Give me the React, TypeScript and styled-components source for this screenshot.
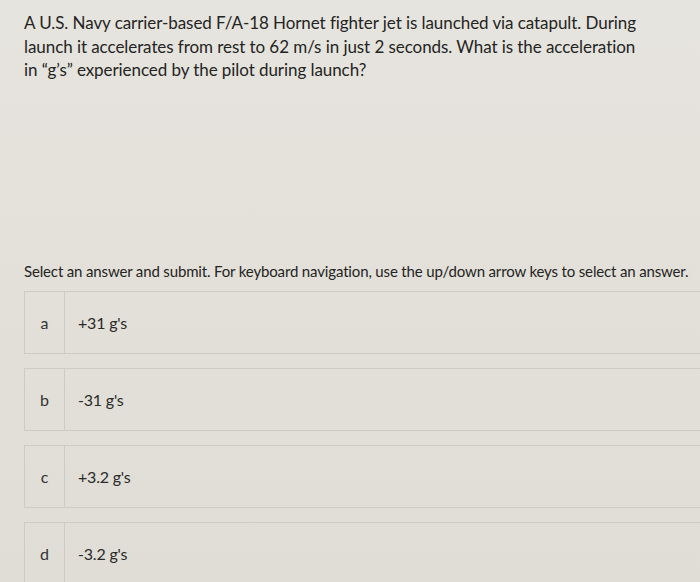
import React from "react";
import styled, { createGlobalStyle } from "styled-components";

const Global = createGlobalStyle`
  html, body { margin: 0; padding: 0; background: #e2e0d8; }
  body { font-family: Lato, "Open Sans", sans-serif; color: #242424; overflow: hidden; }
`;

const Page = styled.div`
  width: 700px;
  height: 582px;
  padding: 11px 0 0 24px;
  box-sizing: border-box;
  overflow: hidden;
  background: linear-gradient(180deg, #e6e4de 0%, #e2e0d8 50%, #dfddd5 100%);
`;

const Question = styled.div`
  font-size: 17px;
  line-height: 23.5px;
  letter-spacing: -0.07px;
  height: 249px;
`;

const Line = styled.span`
  display: block;
  white-space: nowrap;
`;

const Instruction = styled.div`
  font-size: 15px;
  line-height: 22px;
  letter-spacing: -0.15px;
  white-space: nowrap;
  margin-bottom: 9px;
`;

const Options = styled.div`
  display: flex;
  flex-direction: column;
  gap: 14px;
  margin-right: -20px;
`;

const Option = styled.div`
  display: flex;
  height: 63px;
  border: 1.5px solid #cdcbc4;
  box-sizing: border-box;
`;

const Letter = styled.div`
  width: 39px;
  flex: none;
  border-right: 1.5px solid #cdcbc4;
  display: flex;
  align-items: center;
  justify-content: center;
  font-size: 16px;
  color: #333;
`;

const Answer = styled.div`
  flex: 1;
  display: flex;
  align-items: center;
  padding-left: 13px;
  font-size: 16px;
  letter-spacing: -0.2px;
  color: #2a2a2a;
`;

const options = [
  ["a", "+31 g's"],
  ["b", "-31 g's"],
  ["c", "+3.2 g's"],
  ["d", "-3.2 g's"],
];

export default function App() {
  return (
    <>
      <Global />
      <Page>
        <Question>
          <Line>A U.S. Navy carrier-based F/A-18 Hornet fighter jet is launched via catapult. During</Line>
          <Line>launch it accelerates from rest to 62 m/s in just 2 seconds. What is the acceleration</Line>
          <Line>in “g’s” experienced by the pilot during launch?</Line>
        </Question>
        <Instruction>
          Select an answer and submit. For keyboard navigation, use the up/down arrow keys to select an answer.
        </Instruction>
        <Options>
          {options.map(([l, t]) => (
            <Option key={l}>
              <Letter>{l}</Letter>
              <Answer>{t}</Answer>
            </Option>
          ))}
        </Options>
      </Page>
    </>
  );
}
